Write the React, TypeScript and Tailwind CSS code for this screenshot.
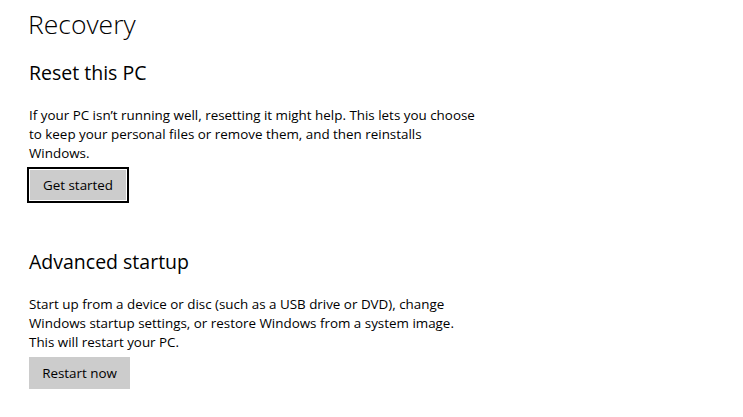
export default function App() {
	return (
		<main className="w-[743px] h-[417px] overflow-hidden bg-white text-black pl-[29px] font-['Open_Sans',sans-serif]">
			<h1 className="text-[26.5px] font-light leading-[36px] pt-[6px] -ml-[1px]">Recovery</h1>

			<section className="mt-[17px]">
				<h2 className="text-[19.5px] leading-[28px]">Reset this PC</h2>
				<p className="mt-[19px] text-[13.4px] leading-[19px]">
					If your PC isn’t running well, resetting it might help. This lets you choose
					<br />
					to keep your personal files or remove them, and then reinstalls
					<br />
					Windows.
				</p>
				<button className="mt-[6px] h-[32px] w-[98px] bg-[#cccccc] text-[13.4px] outline-2 outline-black shadow-[inset_0_0_0_1px_#ffffff]">
					Get started
				</button>
			</section>

			<section className="mt-[47px]">
				<h2 className="text-[19.5px] leading-[28px]">Advanced startup</h2>
				<p className="mt-[19px] text-[13.4px] leading-[19px]">
					Start up from a device or disc (such as a USB drive or DVD), change
					<br />
					Windows startup settings, or restore Windows from a system image.
					<br />
					This will restart your PC.
				</p>
				<button className="mt-[5px] h-[32px] w-[101px] bg-[#cccccc] text-[13.4px]">Restart now</button>
			</section>
		</main>
	);
}
